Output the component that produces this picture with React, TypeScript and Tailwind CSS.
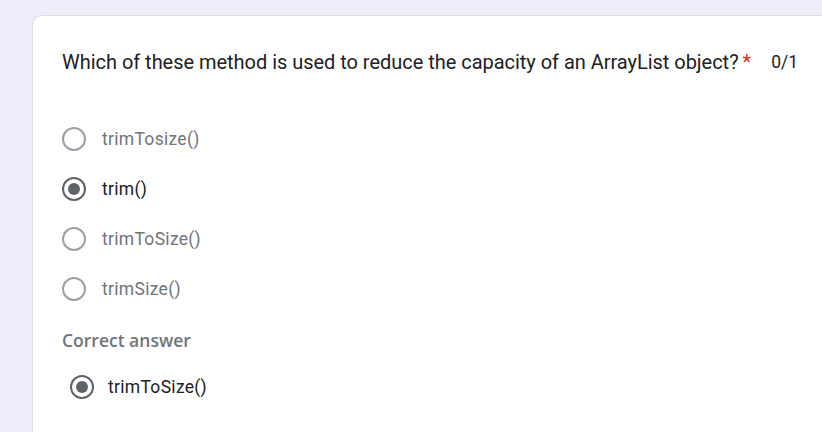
import React from "react";

function Radio({ checked }: { checked?: boolean }) {
  const border = checked ? "border-[#5f6368]" : "border-[#9aa0a6]";
  return (
    <span className={`flex h-[24px] w-[24px] shrink-0 items-center justify-center rounded-full border-[2.5px] ${border}`}>
      {checked && <span className="h-[12px] w-[12px] rounded-full bg-[#5f6368]" />}
    </span>
  );
}

function Option({ label, checked }: { label: string; checked?: boolean }) {
  return (
    <div className="flex h-[50px] items-center gap-[16px]">
      <Radio checked={checked} />
      <span className={`text-[17.5px] tracking-[0.3px] ${checked ? "text-[#202124]" : "text-[#70757a]"}`}>{label}</span>
    </div>
  );
}

export default function App() {
  return (
    <div
      className="h-[432px] w-[822px] overflow-hidden bg-[#f0ebf8] pl-[32px] pt-[15px]"
      style={{ fontFamily: "Roboto, 'Liberation Sans', sans-serif" }}
    >
      <div className="h-[460px] w-[830px] rounded-[10px] border border-[#dadce0] bg-white pl-[29px] pt-[32px]">
        <div className="flex items-start text-[20px] leading-[28px] text-[#202124]">
          <span className="tracking-[-0.03px]">Which of these method is used to reduce the capacity of an ArrayList object?</span>
          <span className="ml-[4px] text-[#d93025]">*</span>
          <span className="ml-[20px] text-[17.5px]">0/1</span>
        </div>
        <div className="mt-[38px] flex flex-col">
          <Option label="trimTosize()" />
          <Option label="trim()" checked />
          <Option label="trimToSize()" />
          <Option label="trimSize()" />
        </div>
        <div
          className="mt-[14px] text-[17.5px] font-semibold leading-[24px] text-[#70757a]"
          style={{ fontFamily: "'Open Sans', Roboto, sans-serif" }}
        >
          Correct answer
        </div>
        <div className="mt-[10px] pl-[8px]">
          <div className="flex h-[50px] items-center gap-[14px]">
            <Radio checked />
            <span className="text-[17.5px] tracking-[0.3px] text-[#202124]">trimToSize()</span>
          </div>
        </div>
      </div>
    </div>
  );
}
